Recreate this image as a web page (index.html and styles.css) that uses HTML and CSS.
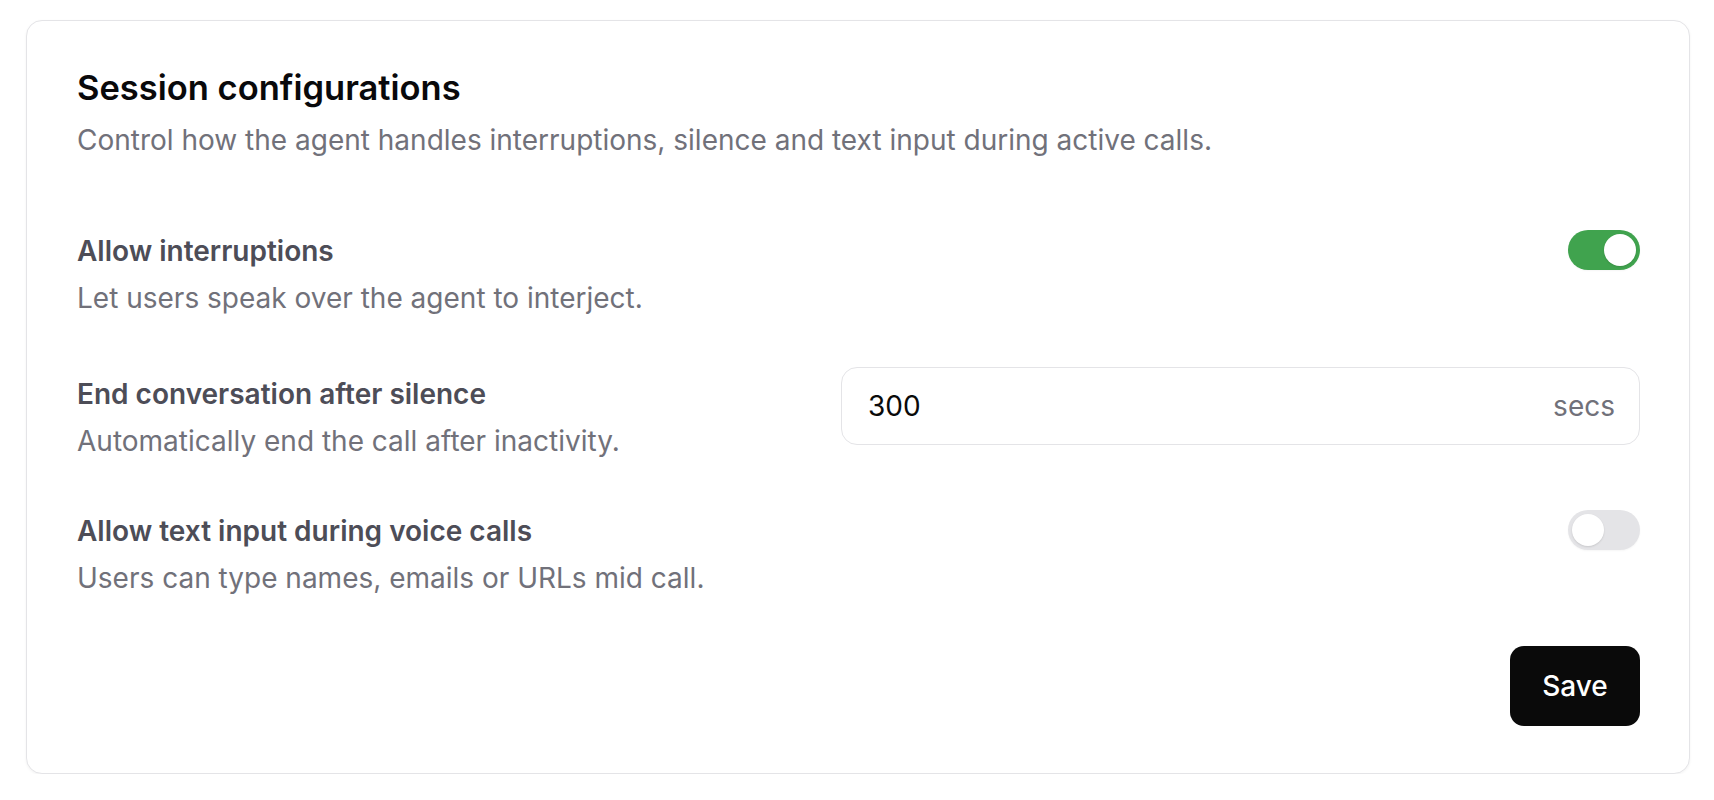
FILE: index.html
```html
<!DOCTYPE html>
<html lang="en">
<head>
<meta charset="utf-8">
<title>Session configurations</title>
<link rel="stylesheet" href="styles.css">
</head>
<body>
<section class="card">
  <header class="card-head">
    <h1 class="card-title">Session configurations</h1>
    <p class="card-desc">Control how the agent handles interruptions, silence and text input during active calls.</p>
  </header>
  <div class="rows">
    <div class="row">
      <div class="row-text">
        <div class="row-label">Allow interruptions</div>
        <div class="row-desc">Let users speak over the agent to interject.</div>
      </div>
      <button class="toggle toggle--on" type="button" aria-pressed="true"><span class="knob"></span></button>
    </div>
    <div class="row row--input">
      <div class="row-text">
        <div class="row-label">End conversation after silence</div>
        <div class="row-desc">Automatically end the call after inactivity.</div>
      </div>
      <label class="field">
        <span class="field-value">300</span>
        <span class="field-unit">secs</span>
      </label>
    </div>
    <div class="row">
      <div class="row-text">
        <div class="row-label">Allow text input during voice calls</div>
        <div class="row-desc">Users can type names, emails or URLs mid call.</div>
      </div>
      <button class="toggle" type="button" aria-pressed="false"><span class="knob"></span></button>
    </div>
  </div>
  <footer class="card-foot">
    <button class="btn-save" type="button">Save</button>
  </footer>
</section>
</body>
</html>
```
FILE: styles.css
```css
* { box-sizing: border-box; }
html, body { margin: 0; background: #ffffff; }
body {
  padding: 20px 24px 0 26px;
  font-family: Inter, "Noto Sans", "Liberation Sans", sans-serif;
}
.card {
  border: 1px solid #e4e4e7;
  border-radius: 16px;
  background: #fff;
  box-shadow: 0 1px 3px rgba(0, 0, 0, 0.05);
  padding: 45px 49px 47px 50px;
}
.card-title {
  margin: 0;
  font-size: 34.5px;
  line-height: 44px;
  font-weight: 600;
  color: #09090b;
}
.card-desc {
  margin: 10px 0 0;
  font-size: 28px;
  line-height: 40px;
  color: #71717a;
}
.rows {
  display: flex;
  flex-direction: column;
  gap: 49px;
  margin-top: 70px;
}
.row {
  display: flex;
  align-items: flex-start;
  justify-content: space-between;
}
.row-text { margin-top: 3px; }
.row--input .row-text { margin-top: 9px; }
.row-label {
  font-size: 28px;
  line-height: 36px;
  font-weight: 600;
  color: #4d4d57;
}
.row-desc {
  margin-top: 9px;
  font-size: 28px;
  line-height: 40px;
  color: #71717a;
}
.toggle {
  width: 72px;
  height: 40px;
  border: 0;
  padding: 4px;
  border-radius: 20px;
  background: #e4e4e7;
  display: flex;
  align-items: center;
  cursor: pointer;
  flex-shrink: 0;
  box-shadow: 0 1px 2px rgba(0,0,0,0.04);
}
.toggle .knob {
  width: 32px;
  height: 32px;
  border-radius: 50%;
  background: #fff;
  box-shadow: 0 1px 2px rgba(0,0,0,0.12);
}
.toggle--on {
  background: #40a34e;
  justify-content: flex-end;
}
.field {
  width: 799px;
  height: 78px;
  flex-shrink: 0;
  border: 1px solid #e4e4e7;
  border-radius: 16px;
  display: flex;
  align-items: center;
  justify-content: space-between;
  padding: 0 24px 0 26px;
  font-size: 28px;
}
.field-value { color: #0a0a0a; }
.field-unit { color: #71717a; }
.card-foot {
  display: flex;
  justify-content: flex-end;
  margin-top: 48px;
}
.btn-save {
  width: 130px;
  height: 80px;
  border: 0;
  border-radius: 14px;
  background: #0a0a0a;
  color: #fff;
  font-family: inherit;
  font-size: 28px;
  font-weight: 500;
  cursor: pointer;
}
```
